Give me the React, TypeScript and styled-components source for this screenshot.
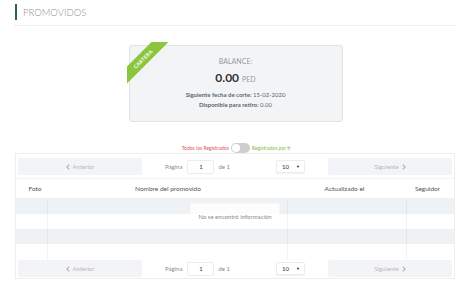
import React from "react";
import styled, { createGlobalStyle } from "styled-components";

const GlobalStyle = createGlobalStyle`
  html, body {
    margin: 0;
    padding: 0;
    background: #ffffff;
  }
  body {
    font-family: Lato, "Open Sans", "Liberation Sans", sans-serif;
  }
`;

const Page = styled.div`
  width: 468px;
  height: 282px;
  box-sizing: border-box;
  padding: 4px 12px 0 15px;
  overflow: hidden;
`;

const TitleBar = styled.div`
  display: flex;
  align-items: center;
  height: 16px;
  border-left: 2px solid #1d6b4b;
  padding-left: 6px;
`;

const Title = styled.h1`
  margin: 0;
  font-size: 9.5px;
  font-weight: 300;
  color: #8f8f8f;
`;

const Divider = styled.div`
  margin-top: 5px;
  border-top: 1px dotted #e0e0e0;
`;

const Card = styled.div`
  position: relative;
  box-sizing: border-box;
  width: 214px;
  height: 77px;
  margin: 19px auto 0;
  padding-top: 11px;
  background: #f3f4f6;
  border: 1px solid #e1e3e6;
  border-radius: 3px;
  display: flex;
  flex-direction: column;
  align-items: center;
`;

const Corner = styled.div`
  position: absolute;
  left: -3px;
  top: -4px;
  width: 45px;
  height: 45px;
  overflow: hidden;
`;

const Ribbon = styled.div`
  position: absolute;
  left: -16px;
  top: 11px;
  width: 64px;
  height: 12px;
  line-height: 12px;
  transform: rotate(-45deg);
  background: #8cc63f;
  color: #ffffff;
  font-size: 5px;
  font-weight: 700;
  letter-spacing: 0.3px;
  text-align: center;
`;

const BalanceLabel = styled.div`
  font-size: 7px;
  line-height: 9px;
  color: #9a9a9a;
`;

const Amount = styled.div`
  margin-top: 5px;
  display: flex;
  align-items: baseline;
  gap: 3px;
  line-height: 14px;
`;

const AmountValue = styled.span`
  font-size: 12px;
  font-weight: 700;
  color: #333333;
`;

const Currency = styled.span`
  font-size: 7px;
  color: #9a9a9a;
`;

const InfoLine = styled.div<{ $gap: number }>`
  margin-top: ${(p) => p.$gap}px;
  font-size: 6px;
  line-height: 8px;
  color: #5b6670;

  b {
    font-weight: 700;
  }
`;

const ToggleRow = styled.div`
  margin-top: 21px;
  height: 10px;
  display: flex;
  align-items: center;
  justify-content: center;
  gap: 2px;
  padding-left: 1px;
  font-size: 5px;
`;

const ToggleLabel = styled.span<{ $color: string }>`
  color: ${(p) => p.$color};
`;

const Switch = styled.span`
  position: relative;
  width: 19px;
  height: 10px;
  border-radius: 5px;
  background: #cfcfcf;
`;

const Knob = styled.span`
  position: absolute;
  left: 1px;
  top: 1px;
  width: 8px;
  height: 8px;
  border-radius: 50%;
  background: #ffffff;
`;

const Table = styled.div`
  position: relative;
  box-sizing: border-box;
  width: 440px;
  border: 1px solid #eeeeee;
`;

const Pagination = styled.div<{ $top?: boolean }>`
  display: flex;
  align-items: center;
  padding: ${(p) => (p.$top ? "4px 2px 3px" : "1px 2px")};
`;

const NavButton = styled.div`
  flex: 1;
  height: 17px;
  display: flex;
  align-items: center;
  justify-content: center;
  gap: 3px;
  background: #f2f4f7;
  border-radius: 2px;
  font-size: 6px;
  color: #b8b8b8;
`;

const Center = styled.div`
  flex: 1.5;
  display: flex;
  align-items: center;
  justify-content: space-around;
`;

const PageInfo = styled.div`
  display: flex;
  align-items: center;
  font-size: 6px;
  color: #8a8a8a;
`;

const PageInput = styled.div`
  box-sizing: border-box;
  width: 27px;
  height: 14px;
  margin: 0 4px 0 5px;
  display: flex;
  align-items: center;
  justify-content: center;
  background: #ffffff;
  border: 1px solid #ececec;
  border-radius: 2px;
  font-size: 6px;
  color: #333333;
`;

const SizeSelect = styled.div`
  box-sizing: border-box;
  width: 29px;
  height: 13px;
  padding: 0 4px 0 5px;
  display: flex;
  align-items: center;
  justify-content: space-between;
  background: #ffffff;
  border: 1px solid #ececec;
  border-radius: 2px;
  box-shadow: 0 1px 1px rgba(0, 0, 0, 0.06);
  font-size: 6px;
  color: #333333;
`;

const Caret = styled.span`
  font-size: 4px;
  color: #222222;
`;

const Row = styled.div<{ $striped?: boolean; $height: number }>`
  display: grid;
  grid-template-columns: 32px 240px 119px 47px;
  height: ${(p) => p.$height}px;
  background: ${(p) => (p.$striped ? "#eff2f5" : "#ffffff")};
`;

const HeadCell = styled.div`
  display: flex;
  align-items: center;
  justify-content: center;
  font-size: 6.5px;
  color: #555555;

  &:first-child {
    padding-left: 6px;
  }

  &:nth-child(3),
  &:last-child {
    padding-right: 6px;
  }
`;

const Cell = styled.div`
  border-right: 1px solid rgba(0, 0, 0, 0.05);

  &:last-child {
    border-right: none;
  }
`;

const HeaderRow = styled(Row)`
  border-top: 1px solid #f4f4f4;
  border-bottom: 1px solid #f0f0f0;
`;

const NoData = styled.div`
  position: absolute;
  left: 50%;
  top: 50%;
  transform: translate(-50%, -50%);
  padding: 9px 8px;
  background: rgba(255, 255, 255, 0.85);
  font-size: 6px;
  color: #8a8a8a;
  white-space: nowrap;
`;

const Chevron: React.FC<{ dir: "left" | "right" }> = ({ dir }) => (
  <svg width="4" height="6" viewBox="0 0 4 6">
    <polyline
      points={dir === "left" ? "3.2,0.6 0.9,3 3.2,5.4" : "0.8,0.6 3.1,3 0.8,5.4"}
      fill="none"
      stroke="#b0b0b0"
      strokeWidth="1.1"
    />
  </svg>
);

const PaginationBar: React.FC<{ top?: boolean }> = ({ top }) => (
  <Pagination $top={top}>
    <NavButton>
      <Chevron dir="left" />
      Anterior
    </NavButton>
    <Center>
      <PageInfo>
        Página
        <PageInput>1</PageInput>
        de 1
      </PageInfo>
      <SizeSelect>
        10
        <Caret>▼</Caret>
      </SizeSelect>
    </Center>
    <NavButton>
      Siguiente
      <Chevron dir="right" />
    </NavButton>
  </Pagination>
);

const columns = ["Foto", "Nombre del promovido", "Actualizado el", "Seguidor"];

const App: React.FC = () => {
  const rows = [0, 1, 2, 3];

  return (
    <>
      <GlobalStyle />
      <Page>
        <TitleBar>
          <Title>PROMOVIDOS</Title>
        </TitleBar>
        <Divider />

        <Card>
          <Corner>
            <Ribbon>CARTERA</Ribbon>
          </Corner>
          <BalanceLabel>BALANCE:</BalanceLabel>
          <Amount>
            <AmountValue>0.00</AmountValue>
            <Currency>PED</Currency>
          </Amount>
          <InfoLine $gap={5}>
            <b>Siguiente fecha de corte:</b> 15-02-2020
          </InfoLine>
          <InfoLine $gap={2}>
            <b>Disponible para retiro:</b> 0.00
          </InfoLine>
        </Card>

        <ToggleRow>
          <ToggleLabel $color="#e2535d">Todos los Registrados</ToggleLabel>
          <Switch>
            <Knob />
          </Switch>
          <ToggleLabel $color="#7dbf3f">Registrados por ti</ToggleLabel>
        </ToggleRow>

        <Table>
          <PaginationBar top />
          <HeaderRow $height={19}>
            {columns.map((c) => (
              <HeadCell key={c}>{c}</HeadCell>
            ))}
          </HeaderRow>
          {rows.map((r) => (
            <Row key={r} $striped={r % 2 === 0} $height={15}>
              {columns.map((c) => (
                <Cell key={c} />
              ))}
            </Row>
          ))}
          <PaginationBar />
          <NoData>No se encontró información</NoData>
        </Table>
      </Page>
    </>
  );
};

export default App;
